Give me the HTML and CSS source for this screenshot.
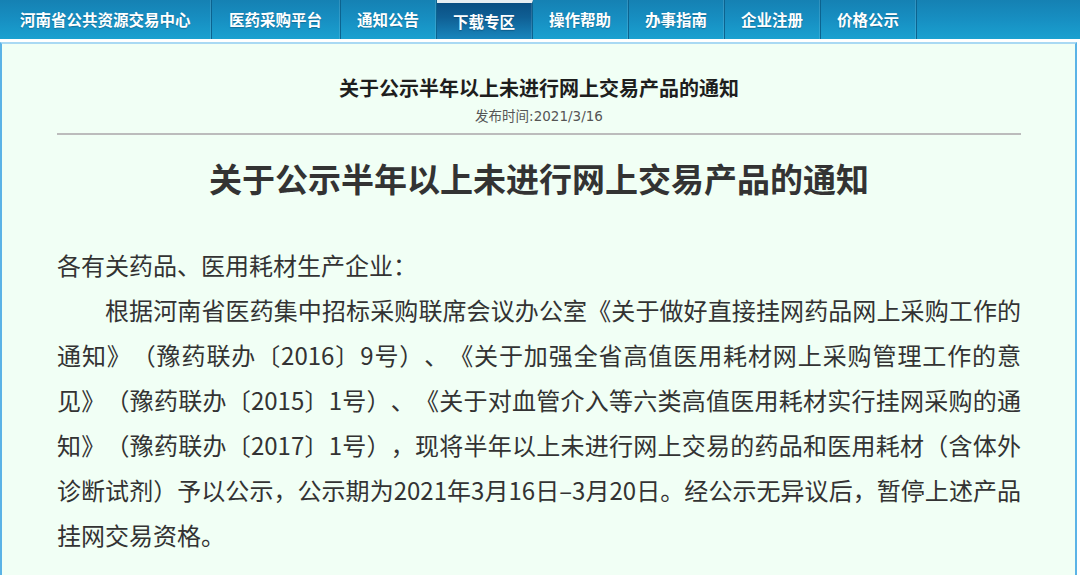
FILE: index.html
```html
<!DOCTYPE html>
<html lang="zh-CN">
<head>
<meta charset="utf-8">
<title>关于公示半年以上未进行网上交易产品的通知</title>
<link rel="stylesheet" href="styles.css">
</head>
<body>
<nav class="nav">
  <a class="nav-item first">河南省公共资源交易中心</a>
  <a class="nav-item wide">医药采购平台</a>
  <a class="nav-item">通知公告</a>
  <a class="nav-item active">下载专区</a>
  <a class="nav-item">操作帮助</a>
  <a class="nav-item">办事指南</a>
  <a class="nav-item">企业注册</a>
  <a class="nav-item">价格公示</a>
</nav>
<main class="box">
  <h2 class="head-title">关于公示半年以上未进行网上交易产品的通知</h2>
  <div class="meta">发布时间:2021/3/16</div>
  <div class="divider"></div>
  <h1 class="big-title">关于公示半年以上未进行网上交易产品的通知</h1>
  <div class="content">
    <p class="para">各有关药品、医用耗材生产企业：</p>
    <p class="para indent">根据河南省医药集中招标采购联席会议办公室《关于做好直接挂网药品网上采购工作的通知》（豫药联办〔2016〕9号）、《关于加强全省高值医用耗材网上采购管理工作的意见》（豫药联办〔2015〕1号）、《关于对血管介入等六类高值医用耗材实行挂网采购的通知》（豫药联办〔2017〕1号），现将半年以上未进行网上交易的药品和医用耗材（含体外诊断试剂）予以公示，公示期为2021年3月16日–3月20日。经公示无异议后，暂停上述产品挂网交易资格。</p>
  </div>
</main>
</body>
</html>
```

FILE: styles.css
```css
html, body {
  margin: 0;
  padding: 0;
  background: #ffffff;
}

body {
  font-family: "Noto Sans CJK SC", "Noto Sans", sans-serif;
  width: 1080px;
  height: 575px;
  overflow: hidden;
  text-spacing-trim: space-all;
  font-feature-settings: "halt" 0, "palt" 0, "chws" 0;
}

.nav {
  display: flex;
  height: 39px;
  background: linear-gradient(to bottom, #1581b3 0%, #178fc2 50%, #1aa1d0 100%);
}

.nav-item {
  display: flex;
  align-items: center;
  padding: 0 16.5px 2px 16.5px;
  border-right: 1px solid #0c638f;
  box-shadow: inset -1px 0 0 rgba(255, 255, 255, 0.12);
  color: #ffffff;
  font-size: 15.5px;
  font-weight: 700;
  text-shadow: 0 1px 1px rgba(0, 40, 70, 0.35);
  white-space: nowrap;
}

.nav-item.first {
  padding: 0 20px 2px 20px;
}

.nav-item.wide {
  padding: 0 17.5px 2px 17.5px;
}

.nav-item.active {
  background: linear-gradient(to bottom, #0b4f83 0%, #0f5f94 40%, #1886bd 100%);
  border-top: 3px solid #e8eef2;
  padding-bottom: 0;
}

.box {
  margin-top: 3px;
  width: 1077px;
  box-sizing: border-box;
  background: #f1fff5;
  border: 2px solid #5bb3e6;
  border-top-color: #a9d9f3;
  padding: 30px 54px 40px 55px;
  height: 540px;
}

.head-title {
  margin: 0;
  text-align: center;
  font-size: 20px;
  line-height: 28px;
  font-weight: 700;
  color: #1e1e1e;
}

.meta {
  margin-top: 4px;
  text-align: center;
  font-family: "DejaVu Sans", "Noto Sans CJK SC", sans-serif;
  font-size: 13.5px;
  line-height: 20px;
  color: #555555;
}

.divider {
  margin-top: 7px;
  height: 2px;
  background: #bcbcbc;
}

.big-title {
  margin: 21px 0 0 0;
  text-align: center;
  font-size: 33px;
  line-height: 44px;
  font-weight: 700;
  color: #333333;
}

.content {
  margin-top: 42px;
}

.para {
  margin: 0;
  font-size: 24px;
  line-height: 45px;
  color: #333333;
  text-align: justify;
}

.para.indent {
  text-indent: 48px;
}
```
